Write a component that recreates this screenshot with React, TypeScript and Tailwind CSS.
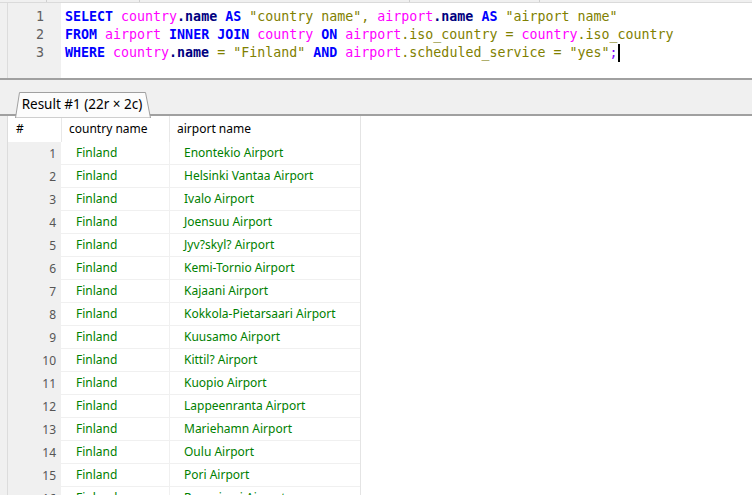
import React from 'react';

const KW = "text-[#0000ff] font-bold";
const TBL = "text-[#ff00ff]";
const STR = "text-[#808000]";
const FLD = "text-[#000080] font-bold";
const SYM = "text-[#808000]";

const rows: [number, string, string][] = [
  [1, 'Finland', 'Enontekio Airport'],
  [2, 'Finland', 'Helsinki Vantaa Airport'],
  [3, 'Finland', 'Ivalo Airport'],
  [4, 'Finland', 'Joensuu Airport'],
  [5, 'Finland', 'Jyv?skyl? Airport'],
  [6, 'Finland', 'Kemi-Tornio Airport'],
  [7, 'Finland', 'Kajaani Airport'],
  [8, 'Finland', 'Kokkola-Pietarsaari Airport'],
  [9, 'Finland', 'Kuusamo Airport'],
  [10, 'Finland', 'Kittil? Airport'],
  [11, 'Finland', 'Kuopio Airport'],
  [12, 'Finland', 'Lappeenranta Airport'],
  [13, 'Finland', 'Mariehamn Airport'],
  [14, 'Finland', 'Oulu Airport'],
  [15, 'Finland', 'Pori Airport'],
  [16, 'Finland', 'Rovaniemi Airport'],
];

const Editor = () => (
  <div className="flex h-[77px] border-b-2 border-[#a0a0a0]">
    <div className="w-[8px] bg-[#f0f0f0] border-r border-[#dcdcdc]" />
    <div className="w-[53px] bg-[#f0f0f0] pt-[5px] pr-[17px] text-right text-[#606060] font-['DejaVu_Sans_Mono',monospace] text-[13.3px] leading-[18px]">
      <div>1</div>
      <div>2</div>
      <div>3</div>
    </div>
    <div className="flex-1 pl-[4px] pt-[5px] whitespace-pre font-['DejaVu_Sans_Mono',monospace] text-[13.3px] leading-[18px]">
      <div>
        <span className={KW}>SELECT</span> <span className={TBL}>country</span><span className={FLD}>.name</span> <span className={KW}>AS</span> <span className={STR}>"country name"</span><span className={SYM}>,</span> <span className={TBL}>airport</span><span className={FLD}>.name</span> <span className={KW}>AS</span> <span className={STR}>"airport name"</span>
      </div>
      <div>
        <span className={KW}>FROM</span> <span className={TBL}>airport</span> <span className={KW}>INNER JOIN</span> <span className={TBL}>country</span> <span className={KW}>ON</span> <span className={TBL}>airport</span><span className={SYM}>.iso_country = </span><span className={TBL}>country</span><span className={SYM}>.iso_country</span>
      </div>
      <div className="flex items-center">
        <span>
          <span className={KW}>WHERE</span> <span className={TBL}>country</span><span className={FLD}>.name</span> <span className={SYM}>=</span> <span className={STR}>"Finland"</span> <span className={KW}>AND</span> <span className={TBL}>airport</span><span className={SYM}>.scheduled_service = </span><span className={STR}>"yes"</span><span className="text-[#8000ff]">;</span>
        </span>
        <span className="inline-block w-[2px] h-[18px] bg-black" />
      </div>
    </div>
  </div>
);

const TabBar = () => (
  <div className="h-[36px] bg-[#f0f0f0] border-b-2 border-[#a0a0a0] flex items-end pl-[15px]">
    <div className="relative w-[136px] h-[24px] -mb-[2px] flex items-center justify-center">
      <svg className="absolute inset-0" width="136" height="26" viewBox="0 0 136 26">
        <polygon points="0.5,26 4.5,0.5 130.5,0.5 135.5,26" fill="#fcfcfc" stroke="#a0a0a0" strokeWidth="1" />
      </svg>
      <span className="relative text-[13.5px] text-black pt-[1px] -ml-[2px]">Result #1 (22r × 2c)</span>
    </div>
  </div>
);

const Grid = () => (
  <div className="flex">
    <div className="w-[8px] bg-[#f0f0f0] border-r border-[#dcdcdc] self-stretch" />
    <div className="w-[353px] border-r border-[#e4e4e4]">
      <div className="flex h-[26px] items-center text-black text-[12px]">
        <div className="w-[53px] pl-[8px]">#</div>
        <div className="w-[108px] h-full flex items-center pl-[7px] border-l border-[#e8e8e8]">country name</div>
        <div className="flex-1 h-full flex items-center pl-[7px] border-l border-[#e8e8e8]">airport name</div>
      </div>
      {rows.map(([n, c, a]) => (
        <div key={n} className="flex h-[23px] text-[12px]">
          <div className="w-[53px] bg-[#f0f0f0] flex items-center justify-end pr-[5px] text-[#555555]">{n}</div>
          <div className="w-[108px] flex items-center pl-[15px] text-[#008000] border-b border-[#f0f0f0]">{c}</div>
          <div className="flex-1 flex items-center pl-[14px] text-[#008000] border-b border-l border-[#f0f0f0]">{a}</div>
        </div>
      ))}
    </div>
    <div className="flex-1" />
  </div>
);

export default function App() {
  return (
    <div className="w-[752px] h-[495px] overflow-hidden bg-white font-['Noto_Sans',sans-serif]">
      <div className="h-[3px] bg-[#f0f0f0] border-b border-[#dadada] flex">
        <div className="w-[47px] border-r border-[#d0d0d0]" />
        <div className="w-[93px] border-r border-[#d0d0d0]" />
        <div className="w-[270px] border-r border-[#d0d0d0]" />
        <div className="w-[130px] border-r border-[#d0d0d0]" />
      </div>
      <Editor />
      <TabBar />
      <Grid />
    </div>
  );
}
